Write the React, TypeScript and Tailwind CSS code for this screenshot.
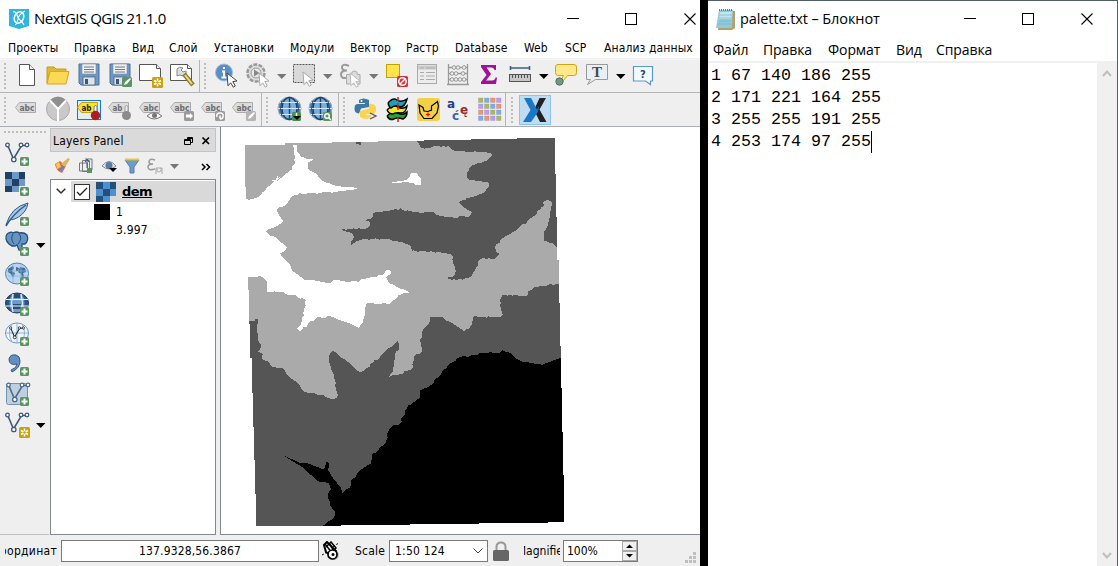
import React from "react";

type Kids = { children?: React.ReactNode };

const Icon = ({ children }: Kids) => (
  <span className="flex w-[31px] shrink-0">
    <svg width="26" height="26" viewBox="0 0 26 26" className="shrink-0 overflow-visible">{children}</svg>
  </span>
);

const Arrow = ({ color = "#000" }: { color?: string }) => (
  <span className="flex w-[15px] shrink-0 items-center">
    <svg width="10" height="5" viewBox="0 0 10 5"><path d="M0 0H9.500L4.750 5Z" fill={color} /></svg>
  </span>
);

const Grip = () => (
  <svg width="3" height="26" viewBox="0 0 3 26" className="mr-[8px] shrink-0">
    {[0, 4, 8, 12, 16, 20, 24].map((y) => <rect key={y} x="0" y={y} width="2" height="2" fill="#bdbdbd" />)}
  </svg>
);

const Pointer = ({ x = 12, y = 10, fill = "#fff", stroke = "#444" }) => (
  <path d={`M${x} ${y}l10 8-4.200.600 2.500 4.400-2 1.200-2.600-4.400-2.700 3Z`} fill={fill} stroke={stroke} strokeWidth="1" />
);

const Plus = ({ x = 15, y = 15 }) => (
  <g>
    <rect x={x} y={y} width="9" height="9" rx="1.500" fill="#5b9460" />
    <path d={`M${x + 4.5} ${y + 1.5}v6M${x + 1.5} ${y + 4.5}h6`} stroke="#fff" strokeWidth="2" />
  </g>
);

const Star = ({ x, y }: { x: number; y: number }) => (
  <g>
    <rect x={x} y={y} width="11" height="11" rx="1.500" fill="#c9a20c" />
    <path d={`M${x + 5.5} ${y + 1.5}v8M${x + 2} ${y + 3.5}l7 4M${x + 9} ${y + 3.5}l-7 4`} stroke="#fff" strokeWidth="1.500" />
    <circle cx={x + 5.5} cy={y + 5.5} r="1.300" fill="#c9a20c" />
  </g>
);

const Floppy = () => (
  <g>
    <path d="M2 1h20v21H4l-2-2Z" fill="#6d98c6" stroke="#4b7199" />
    <rect x="5" y="1" width="14" height="10" fill="#eef1f3" stroke="#7e8c99" strokeWidth=".6" />
    <path d="M7 4h10M7 6.500h10M7 9h10" stroke="#777" />
    <rect x="6" y="14" width="12" height="8" fill="#dfe4e8" stroke="#49698a" strokeWidth=".8" />
    <rect x="8" y="16" width="3" height="5" fill="#35577e" />
  </g>
);

const Tag = ({ fill = "#dcdcdc", stroke = "#aaa", color = "#6e6e6e", text = "abc" }) => (
  <g>
    <path d="M.5 10.500L4.500 5.500H20.500V15.500H4.500Z" fill={fill} stroke={stroke} />
    <text x="4.500" y="13.800" fontSize="9.500" fontWeight="bold" fontFamily="DejaVu Sans, sans-serif" fill={color} textLength={text === "abc" ? 15 : 10} lengthAdjust="spacingAndGlyphs">{text}</text>
  </g>
);

const GlobeBlue = () => (
  <g>
    <circle cx="12.500" cy="11.500" r="11.500" fill="#4a86bd" stroke="#a3adb5" />
    <ellipse cx="12.500" cy="11.500" rx="7.500" ry="11" fill="#75b0e2" stroke="#1d4468" strokeWidth="1.400" />
    <path d="M12.500 0V23" stroke="#1d4468" strokeWidth="1.400" />
    <path d="M1 11.500H24M3 5.500H22M3 17.500H22" stroke="#d7e9f8" strokeWidth="1.200" />
    <path d="M5 4Q2 12 5 19M20 4Q23 12 20 19" fill="none" stroke="#234a70" strokeWidth="1" />
  </g>
);

const VLine = ({ c = "#3c5a78", y = 0 }) => (
  <g transform={`translate(0 ${y})`} stroke={c} fill="#fff">
    <path d="M3 4L8.500 17L16.500 3.500H21" fill="none" strokeWidth="1.600" />
    <circle cx="2.500" cy="3" r="1.800" strokeWidth="1.300" />
    <circle cx="8.800" cy="17.500" r="2.200" strokeWidth="1.300" />
    <circle cx="16" cy="3" r="1.800" strokeWidth="1.300" />
    <circle cx="22" cy="3" r="1.800" strokeWidth="1.300" />
  </g>
);

const Checker = ({ a = "#20415f", b = "#6d98cb" }) => (
  <g shapeRendering="crispEdges">
    {[0, 1, 2].map((r) => [0, 1, 2].map((c) =>
      (r === 2 && c === 2) ? null : <rect key={`${r}${c}`} x={c * 7} y={r * 7} width={c === 2 ? 6 : 7} height={r === 2 ? 6 : 7} fill={(r + c) % 2 ? b : a} />))}
  </g>
);

const Min = () => <svg width="12" height="12" viewBox="0 0 12 12"><path d="M0 5.500H12" stroke="#000" /></svg>;
const Max = () => <svg width="12" height="12" viewBox="0 0 12 12"><rect x=".5" y=".5" width="11" height="11" fill="none" stroke="#000" /></svg>;
const Close = () => <svg width="12" height="12" viewBox="0 0 12 12"><path d="M.5.5L11.500 11.500M11.500.5L.5 11.500" stroke="#000" strokeWidth="1.100" /></svg>;

const outline =
  "245,145 285,145 285,143 332,143 332,142 378,142 378,141 424,141 424,140 471,140 471,139 517,139 517,138 555,138 555,174 556,174 556,217 557,217 557,260 559,260 559,303 560,303 560,346 561,346 561,388 562,388 562,432 563,432 563,475 564,475 564,522 548,522 548,523 479,523 479,524 410,524 410,525 341,525 341,526 256,526 256,494 255,494 255,460 254,460 254,427 253,427 253,393 252,393 252,358 250,358 250,324 249,324 249,290 248,290 248,277 246,277 246,187 245,187";
const darkTop =
  "417,137 417,141 419,144 421,148 430,148 438,146 448,146 452,150 455,151 478,152 490,153 492,155 489,158 483,162 478,163 470,167 469,170 467,172 467,177 469,180 478,181 488,182 489,187 486,191 480,194 472,197 460,201 459,203 463,207 472,212 471,215 468,217 447,217 437,215 433,212 420,213 410,211 402,210 400,208 398,210 396,209 389,211 377,212 373,213 373,217 370,219 365,220 367,221 370,222 370,225 367,228 357,229 341,230 347,232 353,234 354,237 351,241 351,245 357,241 363,239 387,239 400,242 410,245 412,251 440,252 450,254 453,257 453,263 455,267 455,274 452,277 446,278 457,280 467,278 472,275 476,268 478,265 480,259 483,258 495,259 500,254 496,252 495,247 503,238 517,230 527,222 540,210 544,206 544,201 548,200 552,202 551,210 550,217 547,227 544,231 544,241 552,243 557,248 570,248 570,137";
const darkBottom =
  "570,284 559,284 548,285 533,288 528,291 526,296 502,295 500,300 501,310 503,315 500,317 473,317 472,325 469,329 464,331 458,327 452,323 447,321 442,317 430,317 430,321 428,325 423,330 420,340 422,351 414,357 413,368 410,370 400,374 397,375 389,377 393,372 395,357 399,347 398,341 393,346 383,353 373,363 363,371 360,372 355,369 348,362 342,358 335,352 332,351 329,357 330,365 334,375 336,390 338,395 334,399 328,398 323,395 308,393 303,391 298,383 288,376 283,368 272,367 268,361 262,359 263,354 257,352 261,347 258,338 257,328 258,319 255,319 255,321 240,321 240,540 570,540";
const whiteMain =
  "240,199 252,199 258,197 265,191 272,183 278,181 285,174 292,170 293,165 295,163 294,150 293,145 297,145 297,152 299,153 301,157 307,159 313,159 312,161 308,162 308,169 313,172 317,174 320,179 327,183 337,186 347,187 358,188 355,189 342,191 320,193 308,193 295,195 290,199 287,204 280,207 277,209 279,215 283,221 280,224 273,228 266,231 270,236 275,237 282,243 287,247 286,249 280,253 284,259 290,265 292,271 297,274 305,280 317,281 327,283 337,280 347,282 360,281 367,278 377,277 385,273 386,270 391,271 391,274 386,277 388,282 397,287 409,292 409,293 402,294 392,301 389,304 367,303 365,312 363,323 359,328 353,325 342,321 333,317 328,316 323,318 318,317 308,324 302,330 299,331 297,329 301,324 302,320 304,310 306,300 297,297 295,295 288,295 283,292 267,292 267,282 263,277 240,277";
const whiteSmall = "389,183 400,181 407,180 408,178 410,176 411,173 416,173 418,174 419,177 421,178 421,185 415,185 413,183 405,182 399,183";
const black =
  "570,358 561,358 555,360 542,365 533,363 523,362 515,358 512,354 506,352 502,350 500,353 483,353 470,356 457,358 448,365 442,372 438,378 430,385 420,390 420,398 413,402 405,410 403,417 400,424 391,427 384,445 372,455 371,464 358,472 351,482 350,488 342,493 341,488 333,478 328,470 329,463 326,462 324,469 310,464 298,462 283,455 292,461 302,467 318,481 329,483 331,489 328,495 330,505 335,512 334,517 327,523 322,526 322,540 570,540";

/* Splits long segments into short steps with a small fixed offset, like a raster class border. */
const roughen = (points: string) => {
  const pts = points.split(" ").map((p) => p.split(",").map(Number));
  const out: string[] = [];
  pts.forEach(([x, y], i) => {
    const [nx, ny] = pts[(i + 1) % pts.length];
    out.push(`${x},${y}`);
    const n = Math.floor(Math.hypot(nx - x, ny - y) / 2.5);
    for (let k = 1; k < n; k++) {
      const h = Math.abs(Math.sin(x * 12.9 + y * 78.2 + k * 37.7) * 4375.5) % 1;
      const o = (h - 0.5) * 1.7;
      out.push(`${(x + ((nx - x) * k) / n + o).toFixed(1)},${(y + ((ny - y) * k) / n + o).toFixed(1)}`);
    }
  });
  return out.join(" ");
};

const MapCanvas = () => (
  <svg width="479" height="406" viewBox="221 128 479 406" shapeRendering="crispEdges">
    <defs><clipPath id="extent"><polygon points={outline} /></clipPath></defs>
    <g clipPath="url(#extent)">
      <rect x="240" y="130" width="330" height="400" fill="#aaa" />
      <polygon points={roughen(darkTop)} fill="#555" />
      <polygon points={roughen(darkBottom)} fill="#555" />
      <polygon points={roughen(whiteMain)} fill="#fff" />
      <polygon points={whiteSmall} fill="#fff" />
      <polygon points={roughen(black)} fill="#000" />
      <path d="M356 142h5v3h-2v-1h-3Z" fill="#555" />
      <path d="M272 180.500h4l2-4M277 180l3-3" fill="none" stroke="#fff" />
    </g>
  </svg>
);

const ToolbarOne = () => (
  <div className="flex h-[33px] border-b border-[#b5b5b5] bg-[#efefef]">
    <div className="flex w-[200px] items-center border-r border-[#b5b5b5] pl-[4px]">
      <Grip />
      <Icon><path d="M4.500 1.500h10l5 5V22.500H4.500Z" fill="#fff" stroke="#555" /><path d="M14.500 1.500v5h5" fill="#eee" stroke="#555" /></Icon>
      <Icon><path d="M1 4h7l2 2h10V9H4L1 20Z" fill="#e3b92f" stroke="#c59a20" /><path d="M4 8.500h19L20 21H1Z" fill="#fcd955" stroke="#d3a72a" /></Icon>
      <Icon><Floppy /></Icon>
      <Icon><Floppy /><rect x="14" y="14" width="10" height="10" rx="1.500" fill="#5b9460" /><path d="M16 22l1-3 5-4 1 1-4 5Z" fill="#fff" /></Icon>
      <Icon><path d="M.5 1.500h17l4 4V17.500H.5Z" fill="#fff" stroke="#555" /><path d="M17.500 1.500v4h4" fill="#eee" stroke="#555" /><Star x={13} y={14} /></Icon>
      <Icon><path d="M.5 1.500h17l4 4V17.500H.5Z" fill="#fff" stroke="#555" /><path d="M17.500 1.500v4h4" fill="#eee" stroke="#555" />
        <path d="M7 6q2-3 6-1l-2 2 2 2 3-1q1 4-3 5l-3-1-3 1Z" fill="#dedede" stroke="#888" /><path d="M14 11l9 11" stroke="#8e7a2e" strokeWidth="4.500" /><path d="M15 12l7 9" stroke="#f1db7b" strokeWidth="2" /></Icon>
    </div>
    <div className="flex items-center pl-[4px]">
      <Grip />
      <Icon><circle cx="9" cy="9.500" r="8.500" fill="#5b8ec4" stroke="#a3bddb" /><path d="M9 4v2M9 8v7M7 8.500h3M6.500 14.500h5" stroke="#fff" strokeWidth="1.900" /><Pointer /></Icon>
      <Icon><circle cx="10" cy="10" r="8.500" fill="#ddd" stroke="#999" strokeWidth="2.500" strokeDasharray="4 1.300" /><circle cx="10" cy="10" r="5" fill="#e9e9e9" stroke="#999" /><path d="M8 6.500v7l5.500-3.500Z" fill="#888" /><Pointer x={13} stroke="#aaa" /></Icon>
      <Arrow color="#777" />
      <Icon><rect x="1.500" y="1.500" width="21" height="18" fill="#d9d9d9" stroke="#555" strokeDasharray="2 1" /><Pointer x={11} y={9} stroke="#aaa" /></Icon>
      <Arrow color="#777" />
      <Icon><path d="M11 3Q4 0 4 4.500q0 3 5 3-6 0-6 4 0 5 7 3" fill="none" stroke="#999" strokeWidth="2" /><path d="M8.500 11.500h5q0-3.500 3-3.500t3 3.500h2.500V21H8.500Z" fill="#ddd" stroke="#aaa" /><Pointer x={12} y={10} stroke="#bbb" /></Icon>
      <Arrow color="#777" />
      <Icon><rect x="2.500" y="1.500" width="13" height="13" fill="#ffe44d" stroke="#c4a000" /><rect x="13" y="13" width="11" height="11" rx="1.500" fill="#d6313a" /><circle cx="18.500" cy="18.500" r="3.700" fill="none" stroke="#fff" strokeWidth="1.500" /><path d="M15.500 21.500l6-6" stroke="#fff" strokeWidth="1.500" /></Icon>
      <Icon><rect x="2.500" y="1.500" width="19" height="19" fill="#ececec" stroke="#aaa" /><path d="M3 4.500h18" stroke="#ccc" strokeWidth="4" /><path d="M5 5h4M11 5h9M5 9.500h4M11 9.500h9M5 13h4M11 13h9M5 16.500h4M11 16.500h9" stroke="#aaa" strokeWidth="1.200" /></Icon>
      <Icon><path d="M2.500 1v20M21.500 1v20M1 21.500h22M2 4.500h19M2 10.500h19M2 16.500h19" fill="none" stroke="#999" strokeWidth="1.300" />{[[8, 4], [12, 4], [18, 4], [6, 10], [10, 10], [17, 10], [6, 16], [10, 16], [14, 16], [18, 16]].map(([x, y]) => <circle key={`${x}-${y}`} cx={x} cy={y + 0.5} r="1.800" fill="#eee" stroke="#999" />)}</Icon>
      <Icon><path d="M4 2H19V7H17.500Q17 4.500 14 4.500H9.500L14 11L9 17.500H15Q18 17.500 18.500 14.500H20L19 21H4V19L9.500 12L4 4Z" fill="#a0109b" /></Icon>
      <Icon><path d="M2.500 3v4M21.500 3v4M2.500 5h19" stroke="#3b5f87" strokeWidth="1.600" /><rect x="1.500" y="11.500" width="21" height="7" fill="#c6c6c6" stroke="#555" /><path d="M4.500 12v3M7.500 12v3M10.500 12v3M13.500 12v3M16.500 12v3M19.500 12v3" stroke="#555" /></Icon>
      <Arrow />
      <Icon><path d="M4 1.500h16q2.500 0 2.500 2.500v5.500q0 3-2 3h-7l-4 5-2-1 2-4H4q-2.500 0-2.500-3V4q0-2.500 2.500-2.500" fill="#fde98a" stroke="#cfa514" /><circle cx="5.500" cy="18.500" r="3.700" fill="#6f9b79" stroke="#55705a" /></Icon>
      <Icon><path d="M1.500 1.500h21v15h-12l-8 5 3-5h-4Z" fill="#e9f0f5" stroke="#999" /><text x="7" y="14" fontSize="15" fontWeight="bold" fontFamily="Liberation Serif, serif" fill="#4a4a4a">T</text></Icon>
      <Arrow />
      <Icon><path d="M2.500 3.500h19v14.500h-2v3.500l-5-3.500h-12Z" fill="#f3faff" stroke="#5a9ac6" strokeWidth="1.200" /><text x="9" y="14.500" fontSize="10" fontWeight="bold" fontFamily="DejaVu Sans, sans-serif" fill="#28486a">?</text></Icon>
    </div>
  </div>
);

const badgeGray = <rect x="14" y="14" width="10" height="10" rx="1.500" fill="#9b9b9b" />;
const gridFill = ["#a7bd55", "#79aee8", "#fa9168", "#bc9bf1"];

const ToolbarTwo = () => (
  <div className="flex h-[34px] border-b border-[#a9adb1] bg-[#efefef]">
    <div className="flex w-[262px] items-center border-r border-[#b5b5b5] pl-[4px]">
      <Grip />
      <Icon><Tag /></Icon>
      <Icon><circle cx="12" cy="12" r="11.500" fill="#c9c9c9" stroke="#aaa" /><path d="M12 12L4 3q8-7 16 0Z" fill="#8e8e8e" /><path d="M12 24V12L4 3.500M12 12l8-8.500" fill="none" stroke="#fff" strokeWidth="2" /></Icon>
      <Icon><rect x=".5" y="3.500" width="23" height="19" fill="#e1eefa" stroke="#1b75d0" /><Tag fill="#fbe22e" stroke="#c7a500" color="#222" text="ab" /><path d="M17 16V9.500q1.500-2 3 0V16" fill="#fff" stroke="#777" /><circle cx="18.500" cy="18.500" r="4.700" fill="#b01c1c" /></Icon>
      <Icon><Tag text="ab" /><path d="M17 16V9.500q1.500-2 3 0V16" fill="#eee" stroke="#999" /><circle cx="18.500" cy="18.500" r="4.500" fill="#8b8b8b" /></Icon>
      <Icon><Tag /><path d="M8 19q7-7 15 0-8 6-15 0" fill="#f5f5f5" stroke="#777" /><circle cx="15.500" cy="18.500" r="2.500" fill="#777" /></Icon>
      <Icon><Tag />{badgeGray}<path d="M16 17.500h4V16l3 3-3 3v-1.500h-4Z" fill="#fff" /></Icon>
      <Icon><Tag />{badgeGray}<path d="M16 20q-1-4 3-4t3 3.500q0 2.500-3 2.500M19 18.500v3.500" fill="none" stroke="#fff" strokeWidth="1.500" /></Icon>
      <Icon><Tag /><rect x="14" y="14" width="10" height="10" rx="1.500" fill="#b5b5b5" /><path d="M16 22l1-3 5-4 1 1-4 5Z" fill="#fff" /></Icon>
    </div>
    <div className="flex w-[77px] items-center border-r border-[#b5b5b5] pl-[4px]">
      <Grip />
      <Icon><GlobeBlue /><rect x="15" y="15" width="9" height="9" rx="1.500" fill="#4d8c55" /><path d="M19.500 16v4" stroke="#fff" strokeWidth="1.500" /><path d="M16 19h8l-4 4Z" fill="#000" /></Icon>
      <Icon><GlobeBlue /><rect x="15" y="15" width="9" height="9" rx="1.500" fill="#5b9460" /><circle cx="19" cy="19" r="2.300" fill="none" stroke="#fff" strokeWidth="1.400" /><path d="M20.500 20.500l2.500 2.500" stroke="#fff" strokeWidth="1.500" /></Icon>
    </div>
    <div className="flex w-[167px] items-center border-r border-[#b5b5b5] pl-[4px]">
      <Grip />
      <Icon><path d="M5 3q4-3 10 0v7L7 11.500l-2 5Q0 16 .5 11q0-4 3.500-4h7V6H5Z" fill="#3e78a6" /><path d="M15 7h3q5 1 4 6-.5 4-4 4h-6v1h5v2q-5 4-11 0v-6l9-2.500Z" fill="#fad54c" /><circle cx="7.500" cy="4" r="1" fill="#fff" /><path d="M16 16l6 3-6 3" fill="none" stroke="#555" strokeWidth="1.300" /></Icon>
      <Icon><g stroke="#000" strokeWidth="1.500"><path d="M2 19q6-6 11-3t9-1q0 5-4 7-6-2-9 0-4 2-7-3" fill="#23a338" /><path d="M2 13q6-6 11-3t9-1q-1 7-6 7-6-1-8 1-4 0-6-4" fill="#efe82a" /><path d="M3 6q5-6 9-3t10-1q-2 8-7 8-5-3-9 1-2-1-3-5" fill="#1aa1bd" /></g><path d="M13 0v4M13 6v7M13 20v5" stroke="#e01b1b" strokeWidth="1.500" /></Icon>
      <Icon><rect x="1" y="1" width="23" height="23" rx="3" fill="#f2d048" /><path d="M3 8L7 10.500L8 14L12 14.500L15.500 13V9L21.500 4.500L22.500 9L21 16L16 21.500H8L4 16Z" fill="none" stroke="#000" strokeWidth="1.200" /><path d="M12 15.500v4M10 17.500h4" stroke="red" strokeWidth="1.200" /></Icon>
      <Icon><g fontFamily="DejaVu Sans, sans-serif" fontWeight="bold"><text x="0" y="11" fontSize="12" fill="#263e91">a</text><text x="5" y="23" fontSize="12" fill="#3c61ae">ć</text><text x="13" y="17" fontSize="12" fill="#9b2733">ę</text></g></Icon>
      <Icon>{[0, 1, 2, 3].map((r) => [0, 1, 2, 3].map((c) => <rect key={`${r}${c}`} x={0.5 + c * 6} y={1 + r * 6} width="4.500" height="4.500" fill={gridFill[(c + r * 3) % 4]} stroke="#8888aa" strokeOpacity=".4" strokeWidth=".7" />))}</Icon>
    </div>
    <div className="flex items-center pl-[5px]">
      <Grip />
      <span className="-ml-[3px] flex h-[30px] w-[32px] items-center justify-center border border-[#8cc4ee] bg-[#c0dcf3]">
        <svg width="24" height="24" viewBox="0 0 24 24"><path d="M16.500 0H23L16.500 11.500L23.500 24H17L11 12Z" fill="#222" /><path d="M1 0H8L14 11.500L16 8L15 14L8 24H0L7.500 12Z" fill="#1a76c7" /></svg>
      </span>
    </div>
  </div>
);

const Side = ({ children, arrow }: Kids & { arrow?: boolean }) => (
  <div className="flex h-[30px] shrink-0 items-center pl-[5px]"><Icon>{children}</Icon>{arrow && <Arrow />}</div>
);

const SideBar = () => (
  <div className="flex w-[49px] shrink-0 flex-col border-b border-[#c0c0c0]">
    <svg width="49" height="13" viewBox="0 0 49 13" className="shrink-0">{[4, 8, 12, 16, 20, 24, 28, 32, 36, 40, 44].map((x) => <rect key={x} x={x} y="4" width="2" height="2" fill="#bdbdbd" />)}</svg>
    <Side><VLine /><Plus /></Side>
    <Side><Checker /><Plus /></Side>
    <Side><path d="M1 23Q6 5 23 1q-1 5-3 8-6 8-15 9Z" fill="#a7c8e8" stroke="#345d86" /><path d="M1 24Q8 12 21 3" fill="none" stroke="#345d86" strokeWidth="1.500" /><Plus /></Side>
    <Side arrow><path d="M2 2q4-3 6-1 4-2 6 0 5-1 8 2 2 6-2 9h-3v3q-1 4-3 3l-2-5-2 1H7L4 12Q-1 7 2 2" fill="#6595c5" stroke="#284e75" strokeWidth="1.300" /><path d="M8 2q-3 5 1 10M14 2q4 4-1 10" fill="none" stroke="#284e75" /><Plus /></Side>
    <Side><ellipse cx="12" cy="11.500" rx="11.500" ry="10.500" fill="#b9d5ef" stroke="#5482ae" /><path d="M3 7l5-3 1 2-2 3 3 2-2 5-2-4-3-2ZM11 5l3 1-1 3h-2ZM15 5l5 1 1 4-3 1 1 3-2 2-1-4-3-2Z" fill="#426d99" /><path d="M1 9h23M3 14h18M8 2v19M16 2v19" stroke="#86b4dd" strokeWidth=".7" /><Plus /></Side>
    <Side><ellipse cx="12" cy="11" rx="11.500" ry="10" fill="#2d5684" stroke="#243e5a" /><path d="M7 2h10q5 9 0 18H7Q2 11 7 2" fill="#6d9bce" /><path d="M9 2h6v4H9ZM8 12h8v5H8Z" fill="#294d76" /><path d="M1 7.500h22M1 14h22M8 2Q5 11 8 20M16 2q3 9 0 18" fill="none" stroke="#eef5fc" /><Plus /></Side>
    <Side><ellipse cx="12" cy="11" rx="11.500" ry="10" fill="#f1f6fa" stroke="#6799cd" /><path d="M1 11h22M12 1v20M7 2Q2 11 7 20M17 2q5 9 0 18" fill="none" stroke="#8ab2df" /><g transform="translate(4 4) scale(.65)"><VLine c="#222" /></g><Plus /></Side>
    <Side><path d="M6 18q6-2 6-6-8 2-8-5 1-5 7-4 4 1 4 6 0 7-8 11Z" fill="#638fc0" stroke="#35587f" /><Plus /></Side>
    <Side><rect x="1.500" y="1.500" width="21" height="21" rx="2" fill="#bfcfdf" stroke="#7691ad" /><g transform="translate(1 0)"><VLine c="#4c6c8c" /></g><Plus /></Side>
    <Side arrow><VLine /><Star x={14} y={15} /></Side>
  </div>
);

const LayersPanel = () => (
  <div className="flex w-[166px] shrink-0 flex-col font-['DejaVu_Sans_Condensed','DejaVu_Sans',sans-serif] text-[12px]">
    <div className="mt-px flex h-[24px] items-center justify-between border border-[#c3c3c3] bg-[#dadada] pt-px pr-[5px] pl-[2px]">
      <span className="tracking-[0.2px]">Layers Panel</span>
      <svg width="26" height="10" viewBox="0 0 26 10"><path d="M3.500 3V1.500H8.500V6.500H6.500M.5 3.500h6v5H.5ZM0 4.500H7M3 2.500H9" fill="none" stroke="#000" /><path d="M18.500 1.500l6.500 6.500M25 1.500L18.500 8" stroke="#000" strokeWidth="1.700" /></svg>
    </div>
    <div className="flex h-[27px] items-center pl-[4px]">
      <svg width="162" height="20" viewBox="0 0 162 20" className="overflow-visible">
        <path d="M1 8l5-3 6 5-4 7Q2 15 1 8" fill="#e8654a" /><path d="M2 8l3-2 2 5-4 2Z" fill="#f1cd43" /><path d="M6 15l5-4-1-2-6 5Z" fill="#558ac9" /><path d="M7 8l7-6 2 1-5 8Z" fill="#ddb65a" />
        <path d="M25.500 7h8v8h-8ZM28.500 4.500h7v11h-7ZM31 3h7v11" fill="none" stroke="#777" /><path d="M33 12V4M31 6l2-3 2 3" fill="none" stroke="#345d86" /><rect x="33" y="12" width="5" height="5" fill="#5b9460" />
        <path d="M48 10q7-9 14 0-7 6-14 0" fill="#e5e5e5" stroke="#888" /><circle cx="55" cy="9.500" r="3.500" fill="#557ca9" /><path d="M55 12h8l-4 4Z" fill="#000" />
        <path d="M71 4h14l-5 7v6h-4v-6Z" fill="#6d9bce" stroke="#557da8" /><path d="M71 3.500h14" stroke="#e5c83c" strokeWidth="2" />
        <path d="M101 4q-6-2-6 2 0 2 4 2-5 0-5 3 0 4 7 2" fill="none" stroke="#999" strokeWidth="1.500" /><path d="M102 18v-6h6v6M103 12v3q2 2 4 0v-3" fill="none" stroke="#aaa" />
        <path d="M116 8h9l-4.500 5Z" fill="#777" /><path d="M148 8l3 3-3 3M152.500 8l3 3-3 3" fill="none" stroke="#000" strokeWidth="1.500" />
      </svg>
    </div>
    <div className="flex grow flex-col border border-[#828790] bg-white pt-px">
      <div className="flex h-[21px] items-center">
        <span className="flex w-[20px] justify-center"><svg width="10" height="7" viewBox="0 0 10 7"><path d="M.7.800L5 5L9.300.800" fill="none" stroke="#333" strokeWidth="1.600" /></svg></span>
        <span className="flex h-full grow items-center bg-[#d9d9d9] pl-[3px]">
          <svg width="16" height="16" viewBox="0 0 16 16"><rect x=".5" y=".5" width="15" height="15" fill="#fff" stroke="#333" /><path d="M3 8l3 3 7-7" fill="none" stroke="#222" strokeWidth="1.300" /></svg>
          <svg width="20" height="20" viewBox="0 0 20 20" className="ml-[6px]"><Checker a="#245078" b="#4a90d2" /></svg>
          <span className="ml-[6px] text-[13px] font-bold tracking-[-0.500px] underline font-['DejaVu_Sans',sans-serif]">dem</span>
        </span>
      </div>
      <div className="flex h-[19px] items-center pl-[43px]"><span className="h-[16px] w-[16px] bg-black" /><span className="ml-[6px]">1</span></div>
      <div className="flex h-[17px] items-center pl-[65px] tracking-[0.200px]">3.997</div>
    </div>
  </div>
);

const StatusBar = () => (
  <div className="flex h-[31px] items-center pt-px font-['DejaVu_Sans_Condensed','DejaVu_Sans',sans-serif] text-[12px]">
    <div className="flex w-[57px] shrink-0 justify-end pl-[5px]"><span className="flex w-[52px] justify-end overflow-hidden whitespace-nowrap tracking-[0.300px]">Координат</span></div>
    <div className="mr-[3px] ml-[4px] flex h-[22px] w-[258px] shrink-0 items-center justify-center border border-[#7a7a7a] bg-white tracking-[0.150px]">137.9328,56.3867</div>
    <svg width="20" height="20" viewBox="0 0 20 20" className="shrink-0"><circle cx="12" cy="14" r="5" fill="#bbb" /><path d="M2 4l3-3 9 9-4 5-6-4Z" fill="#fff" stroke="#000" strokeWidth="2" /><path d="M4 6l5-5 5 6-5 5M3 3l8 10M7 2l5 8" fill="none" stroke="#000" strokeWidth="1.500" /><circle cx="10.500" cy="13.500" r="4.500" fill="#fff" stroke="#000" strokeWidth="1.700" /><circle cx="11" cy="13.500" r="1.500" /><path d="M11 6q3-3 7-4M0 14l4-2" stroke="#000" strokeDasharray="2 2" fill="none" /></svg>
    <span className="ml-[13px] w-[34px] shrink-0 tracking-[0.200px]">Scale</span>
    <div className="flex h-[22px] w-[99px] shrink-0 items-center justify-between border border-[#7a7a7a] bg-white pr-[4px] pl-[5px] tracking-[0.200px]">1:50 124<svg width="10" height="6" viewBox="0 0 10 6"><path d="M.5.5L5 5L9.500.5" fill="none" stroke="#444" /></svg></div>
    <svg width="16" height="20" viewBox="0 0 16 20" className="ml-[5px] shrink-0"><path d="M3.500 10V6q0-4.500 4.500-4.500T12.500 6v4" fill="none" stroke="#999" strokeWidth="2" /><rect x="0" y="9" width="16" height="11" rx="1.500" fill="#666" /></svg>
    <div className="ml-[15px] flex w-[36px] shrink-0 justify-center overflow-hidden whitespace-nowrap">Magnifier</div>
    <div className="ml-[3px] flex h-[22px] w-[75px] shrink-0 justify-between border border-[#7a7a7a] bg-white pl-[3px]">
      <span className="flex items-center">100%</span>
      <svg width="15" height="20" viewBox="0 0 15 20"><rect x=".5" y=".5" width="14" height="9" fill="#f0f0f0" stroke="#aaa" /><rect x=".5" y="10.500" width="14" height="9" fill="#f0f0f0" stroke="#aaa" /><path d="M4 7h7L7.500 3.500ZM4 13h7l-3.500 3.500Z" /></svg>
    </div>
    <svg width="11" height="12" viewBox="0 0 11 12" className="mt-[14px] ml-[47px] shrink-0"><path d="M8 0h3v3H8ZM4 4h3v3H4ZM8 4h3v3H8ZM0 8h3v3H0ZM4 8h3v3H4ZM8 8h3v3H8Z" fill="#bfbfbf" /></svg>
  </div>
);

const menu: [string, string][] = [
  ["Проекты", "w-[66px]"], ["Правка", "w-[58px]"], ["Вид", "w-[37px]"], ["Слой", "w-[45px]"], ["Установки", "w-[76px]"], ["Модули", "w-[60px]"],
  ["Вектор", "w-[56px]"], ["Растр", "w-[49px]"], ["Database", "w-[69px]"], ["Web", "w-[41px]"], ["SCP", "w-[39px]"], ["Анализ данных", "w-[94px]"],
];
const noteMenu: [string, string][] = [["Файл", "w-[50px]"], ["Правка", "w-[65px]"], ["Формат", "w-[68px]"], ["Вид", "w-[40px]"], ["Справка", "w-[70px]"]];

const QgisWindow = () => (
  <div className="flex h-[566px] w-[700px] shrink-0 flex-col overflow-hidden bg-[#efefef]">
    <div className="flex h-[37px] shrink-0 items-center bg-white pl-[9px]">
      <svg width="20" height="20" viewBox="0 0 20 20"><path d="M0 0H20V17L10 20L0 17Z" fill="#32b5dc" /><ellipse cx="10" cy="8.500" rx="4.500" ry="6" fill="none" stroke="#fff" strokeWidth="1.500" transform="rotate(25 10 8.500)" /><path d="M4 3q3-1 4 3t3 5 4 5M16 2q-6 3-7 8t-3 6" fill="none" stroke="#fff" strokeWidth="1.100" /></svg>
      <span className="ml-[5px] grow font-['Open_Sans','Noto_Sans',sans-serif] text-[15px] tracking-[-0.5px]">NextGIS QGIS 21.1.0</span>
      <span className="mr-[4px] flex shrink-0"><span className="mr-[46px]"><Min /></span><span className="mr-[47px]"><Max /></span><Close /></span>
    </div>
    <div className="flex h-[22px] shrink-0 items-center border-b border-[#f0f0f0] bg-white pl-[8px] font-['DejaVu_Sans_Condensed','DejaVu_Sans',sans-serif] text-[12px] tracking-[0.120px] whitespace-nowrap">
      {menu.map(([t, w]) => <span key={t} className={`${w} shrink-0`}>{t}</span>)}
    </div>
    <div className="h-px shrink-0 bg-[#f7f7f7]" />
    <ToolbarOne />
    <ToolbarTwo />
    <div className="flex min-h-0 grow">
      <SideBar />
      <div className="w-px shrink-0" />
      <LayersPanel />
      <div className="ml-[4px] flex grow border-b border-l border-[#828790] bg-white pt-px"><MapCanvas /></div>
    </div>
    <StatusBar />
  </div>
);

const Notepad = () => (
  <div className="flex grow flex-col border-t border-r border-[#50605f] bg-white">
    <div className="flex h-[36px] items-center pr-[24px] pl-[8px] font-['Open_Sans','Noto_Sans',sans-serif] text-[14.5px]">
      <svg width="20" height="21" viewBox="0 0 20 21"><path d="M4 2h15v17l-3 2H2Z" fill="#b99d66" /><path d="M3 1h14l-1 18H0Z" fill="#91cbdb" /><path d="M4 3h12l-.5 7H3Z" fill="#c3e5ed" /><path d="M3 1h14" stroke="#777" strokeWidth="2" strokeDasharray="1 1" /><path d="M3 6h13M3 9h13M3 12h12M2 15h13" stroke="#77b6c8" strokeWidth=".7" /></svg>
      <span className="ml-[4px] grow tracking-[-0.100px]">palette.txt – Блокнот</span>
      <span className="flex shrink-0"><span className="mr-[46px]"><Min /></span><span className="mr-[47px]"><Max /></span><Close /></span>
    </div>
    <div className="flex h-[26px] items-center border-b-2 border-[#f0f0f0] pl-[5px] font-['Open_Sans','Noto_Sans',sans-serif] text-[14px] tracking-[-0.1px]">
      {noteMenu.map(([t, w]) => <span key={t} className={`${w} shrink-0`}>{t}</span>)}
    </div>
    <div className="flex min-h-0 grow">
      <div className="grow pt-[2px] pl-[3px] font-['Liberation_Mono',monospace] text-[16.67px] leading-[22px] whitespace-pre">
        <p>1 67 140 186 255</p>
        <p>2 171 221 164 255</p>
        <p>3 255 255 191 255</p>
        <p className="flex">4 253 174 97 255<span className="h-[22px] w-px bg-black" /></p>
      </div>
      <div className="flex w-[20px] flex-col items-center justify-between bg-[#f0f0f0] pt-[7px] pb-[7px]">
        <svg width="10" height="7" viewBox="0 0 10 7"><path d="M1 6L5 1.500L9 6" fill="none" stroke="#bfbfbf" strokeWidth="2" /></svg>
        <svg width="10" height="7" viewBox="0 0 10 7"><path d="M1 1L5 5.500L9 1" fill="none" stroke="#bfbfbf" strokeWidth="2" /></svg>
      </div>
    </div>
  </div>
);

export default function App() {
  return (
    <div className="flex h-[566px] w-[1118px] overflow-hidden bg-black text-black">
      <QgisWindow />
      <div className="w-[8px] shrink-0 bg-black" />
      <Notepad />
    </div>
  );
}
